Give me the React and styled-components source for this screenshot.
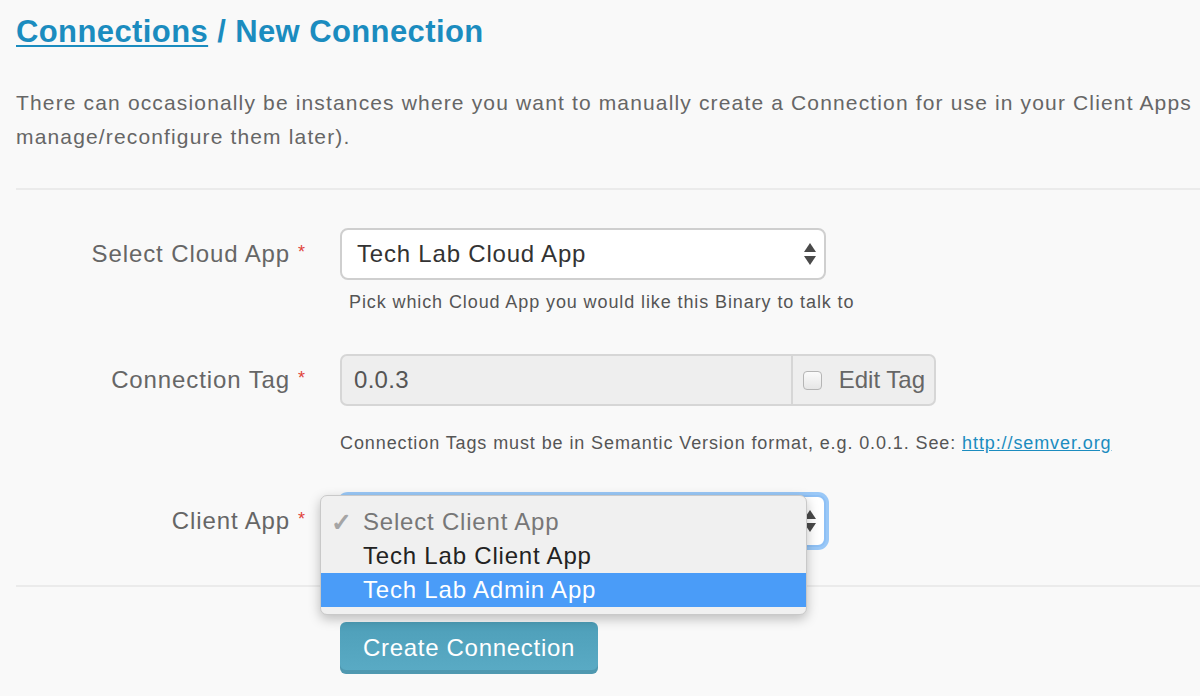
import React from 'react'
import styled, { createGlobalStyle } from 'styled-components'

const GlobalStyle = createGlobalStyle`
  html, body {
    margin: 0;
    padding: 0;
    background: #f9f9f9;
    overflow: hidden;
  }
  body {
    font-family: "Helvetica Neue", "Liberation Sans", Arial, sans-serif;
  }
`;

const Page = styled.div`
  padding: 13px 0 0 16px;
  color: #666;
`;

const Title = styled.h1`
  margin: 0;
  font-size: 31px;
  font-weight: 700;
  letter-spacing: 0.4px;
  color: #1b8cbf;
  line-height: 38px;
`;

const Crumb = styled.a`
  color: #1b8cbf;
  text-decoration: underline;
  text-decoration-thickness: 2px;
  text-underline-offset: 3px;
`;

const Intro = styled.p`
  margin: 35px 0 0;
  font-size: 21px;
  letter-spacing: 1.15px;
  line-height: 34px;
  color: #666;
  white-space: nowrap;
`;

const Divider = styled.hr`
  margin: ${(p) => p.$top || 0}px 0 0;
  border: none;
  border-top: 2px solid #ebebeb;
`;

const Form = styled.div`
  display: flex;
  flex-direction: column;
`;

const Row = styled.div`
  display: grid;
  grid-template-columns: 290px 1fr;
  column-gap: 34px;
  align-items: center;
  margin-top: ${(p) => p.$top || 0}px;
`;

const Label = styled.label`
  text-align: right;
  font-size: 24px;
  letter-spacing: 0.9px;
  color: #666;
`;

const Required = styled.span`
  color: #e0433a;
  font-size: 18px;
  vertical-align: 4px;
  margin-left: 8px;
`;

const Help = styled.div`
  grid-column: 2;
  margin-top: ${(p) => p.$top || 0}px;
  padding-left: ${(p) => p.$indent || 0}px;
  font-size: 18px;
  letter-spacing: 0.9px;
  color: #555;
`;

const Link = styled.a`
  color: #1b8cbf;
  text-decoration: underline;
`;

const SelectWrap = styled.div`
  position: relative;
  width: ${(p) => p.$width}px;
`;

const SelectBox = styled.div`
  box-sizing: border-box;
  height: 52px;
  width: 486px;
  display: flex;
  align-items: center;
  justify-content: space-between;
  padding: 0 7px 0 15px;
  background: #fff;
  border: 2px solid ${(p) => (p.$focus ? '#8ec0f5' : '#cfcfcf')};
  border-radius: 8px;
  font-size: 24px;
  letter-spacing: 0.8px;
  color: #333;
  box-shadow: ${(p) => (p.$focus ? '0 0 0 3px #9ac8f7' : 'none')};
`;

const InputGroup = styled.div`
  display: flex;
  width: 596px;
  height: 52px;
  box-sizing: border-box;
  border: 2px solid #d6d6d6;
  border-radius: 7px;
  background: #eee;
  overflow: hidden;
`;

const TagInput = styled.div`
  flex: 1;
  display: flex;
  align-items: center;
  padding-left: 12px;
  font-size: 24px;
  letter-spacing: 0.3px;
  color: #555;
`;

const Addon = styled.div`
  flex: none;
  display: flex;
  align-items: center;
  gap: 17px;
  padding: 0 9px 0 10px;
  border-left: 2px solid #d6d6d6;
  font-size: 24px;
  white-space: nowrap;
  color: #666;
`;

const CheckBox = styled.span`
  flex: none;
  width: 17px;
  height: 17px;
  border: 1px solid #b5b5b5;
  border-radius: 4px;
  background: linear-gradient(#fbfbfb, #e6e6e6);
`;

const Menu = styled.div`
  position: absolute;
  left: -20px;
  top: 0;
  width: 487px;
  box-sizing: border-box;
  padding: 9px 0 7px;
  background: #f0f0f0;
  border: 1px solid #c9c9c9;
  border-radius: 7px;
  box-shadow: 0 4px 12px rgba(0, 0, 0, 0.25);
  z-index: 2;
`;

const Option = styled.div`
  display: flex;
  align-items: center;
  height: 34px;
  padding-left: 10px;
  font-size: 24px;
  letter-spacing: 0.8px;
  color: ${(p) => (p.$muted ? '#777' : p.$active ? '#fff' : '#222')};
  background: ${(p) => (p.$active ? '#4a9cf8' : 'transparent')};
`;

const Tick = styled.span`
  width: 32px;
  color: #a5a5a5;
  font-size: 25px;
  font-weight: 700;
`;

const Button = styled.button`
  width: 258px;
  height: 52px;
  border: none;
  border-radius: 6px;
  background: linear-gradient(#4e9fb9, #5aabc5);
  box-shadow: inset 0 -4px 0 rgba(0, 0, 0, 0.1);
  color: #fff;
  font-family: inherit;
  font-size: 24px;
  letter-spacing: 0.7px;
  cursor: pointer;
`;

const Arrows = () => (
  <svg width="14" height="26" viewBox="0 0 14 26">
    <path d="M7 2 L13 11 L1 11 Z" fill="#4a4a4a" />
    <path d="M1 15 L13 15 L7 24 Z" fill="#4a4a4a" />
  </svg>
);

const App = () => {
  return (
    <Page>
      <GlobalStyle />
      <Title>
        <Crumb>Connections</Crumb> / New Connection
      </Title>
      <Intro>
        There can occasionally be instances where you want to manually create a Connection for use in your Client Apps
        <br />
        manage/reconfigure them later).
      </Intro>
      <Divider $top={34} />
      <Form>
        <Row $top={38}>
          <Label>
            Select Cloud App<Required>*</Required>
          </Label>
          <SelectWrap $width={486}>
            <SelectBox>
              Tech Lab Cloud App
              <Arrows />
            </SelectBox>
          </SelectWrap>
          <Help $top={12} $indent={9}>
            Pick which Cloud App you would like this Binary to talk to
          </Help>
        </Row>
        <Row $top={41}>
          <Label>
            Connection Tag<Required>*</Required>
          </Label>
          <InputGroup>
            <TagInput>0.0.3</TagInput>
            <Addon>
              <CheckBox />
              Edit Tag
            </Addon>
          </InputGroup>
          <Help $top={27}>
            Connection Tags must be in Semantic Version format, e.g. 0.0.1. See: <Link>http://semver.org</Link>
          </Help>
        </Row>
        <Row $top={41}>
          <Label>
            Client App<Required>*</Required>
          </Label>
          <SelectWrap $width={486}>
            <SelectBox $focus>
              <span />
              <Arrows />
            </SelectBox>
            <Menu>
              <Option $muted>
                <Tick>✓</Tick>Select Client App
              </Option>
              <Option>
                <Tick />Tech Lab Client App
              </Option>
              <Option $active>
                <Tick />Tech Lab Admin App
              </Option>
            </Menu>
          </SelectWrap>
        </Row>
      </Form>
      <Divider $top={38} />
      <Row $top={35}>
        <span />
        <div>
          <Button>Create Connection</Button>
        </div>
      </Row>
    </Page>
  )
}

export default App
